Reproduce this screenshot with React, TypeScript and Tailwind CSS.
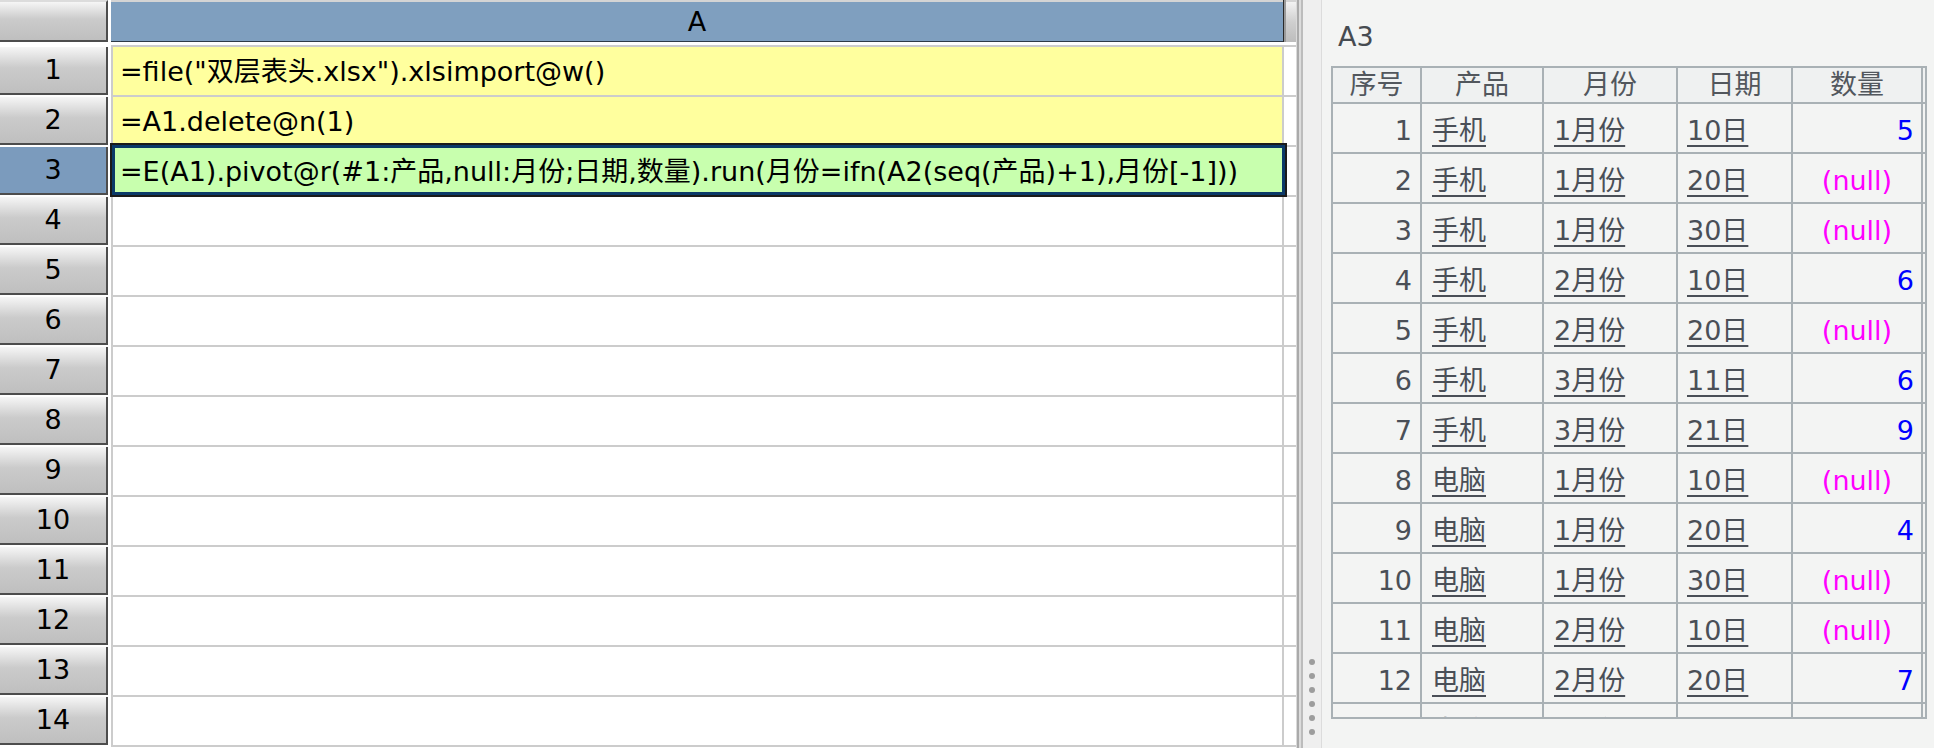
import React from "react";

const font = "font-['DejaVu_Sans','Noto_Sans_CJK_SC',sans-serif]";

type Cell = { text: string; kind: "yellow" | "green" | "white" };

const sheetRows: Cell[] = [
  { text: '=file("双层表头.xlsx").xlsimport@w()', kind: "yellow" },
  { text: "=A1.delete@n(1)", kind: "yellow" },
  {
    text: "=E(A1).pivot@r(#1:产品,null:月份;日期,数量).run(月份=ifn(A2(seq(产品)+1),月份[-1]))",
    kind: "green",
  },
  ...Array.from({ length: 11 }, () => ({ text: "", kind: "white" as const })),
];

type Rec = { no: number; p: string; m: string; d: string; q: number | null };

const data: Rec[] = [
  { no: 1, p: "手机", m: "1月份", d: "10日", q: 5 },
  { no: 2, p: "手机", m: "1月份", d: "20日", q: null },
  { no: 3, p: "手机", m: "1月份", d: "30日", q: null },
  { no: 4, p: "手机", m: "2月份", d: "10日", q: 6 },
  { no: 5, p: "手机", m: "2月份", d: "20日", q: null },
  { no: 6, p: "手机", m: "3月份", d: "11日", q: 6 },
  { no: 7, p: "手机", m: "3月份", d: "21日", q: 9 },
  { no: 8, p: "电脑", m: "1月份", d: "10日", q: null },
  { no: 9, p: "电脑", m: "1月份", d: "20日", q: 4 },
  { no: 10, p: "电脑", m: "1月份", d: "30日", q: null },
  { no: 11, p: "电脑", m: "2月份", d: "10日", q: null },
  { no: 12, p: "电脑", m: "2月份", d: "20日", q: 7 },
  { no: 13, p: "电脑", m: "2月份", d: "30日", q: null },
];

function RowHeader({ n, selected }: { n: number; selected: boolean }) {
  return (
    <div className="w-[108px] h-[50px] shrink-0 pb-[2px]">
      <div
        className={
          "h-[48px] flex items-center justify-center text-[27px] leading-[30px] text-black border-r-2 border-b-2 border-[#4d4d4d] " +
          (selected
            ? "bg-[#7b9bbd]"
            : "bg-linear-to-b from-[#f6f6f6] via-[#cbcbcb] via-45% to-[#bfbfbf]")
        }
      >
        {n}
      </div>
    </div>
  );
}

function SheetRow({ n, cell }: { n: number; cell: Cell }) {
  const bg =
    cell.kind === "yellow" ? "bg-[#ffff9e]" : cell.kind === "green" ? "bg-[#c8ffae]" : "bg-white";
  return (
    <div className="flex h-[50px] shrink-0">
      <RowHeader n={n} selected={cell.kind === "green"} />
      <div className="w-[3px] shrink-0" />
      <div className="relative flex flex-1 border-l-2 border-b-2 border-[#cccccc]">
        <div
          className={
            "w-[1171px] shrink-0 border-r-2 border-[#cccccc] flex items-center pl-[7px] pt-[2px] text-[27px] leading-[30px] text-black whitespace-nowrap " +
            bg
          }
        >
          {cell.text}
        </div>
        <div className="w-[10px] shrink-0 bg-white" />
        {cell.kind === "green" && (
          <div className="absolute left-[-3px] top-[-4px] w-[1177px] h-[54px] border-2 border-[#1b1b1b] shadow-[inset_0_0_0_3px_#0b3a68]" />
        )}
      </div>
    </div>
  );
}

const colW = ["w-[89px]", "w-[122px]", "w-[134px]", "w-[115px]", "w-[130px]"];

function TableRow({ r }: { r: Rec }) {
  const base = "h-full shrink-0 border-r-2 border-[#a9b1b5] flex items-center pt-[6px]";
  const link = "underline decoration-2 underline-offset-[5px]";
  return (
    <div className="flex h-[50px] shrink-0 border-b-2 border-[#a9b1b5] text-[27px] leading-[30px] text-[#4a4f57]">
      <div className={`${base} ${colW[0]} justify-end pr-[8px]`}>{r.no}</div>
      <div className={`${base} ${colW[1]} pl-[10px]`}>
        <span className={link}>{r.p}</span>
      </div>
      <div className={`${base} ${colW[2]} pl-[10px]`}>
        <span className={link}>{r.m}</span>
      </div>
      <div className={`${base} ${colW[3]} pl-[9px]`}>
        <span className={link}>{r.d}</span>
      </div>
      {r.q === null ? (
        <div className={`${base} ${colW[4]} justify-center text-[#ff00ff]`}>(null)</div>
      ) : (
        <div className={`${base} ${colW[4]} justify-end pr-[7px] text-[#0000ff]`}>{r.q}</div>
      )}
    </div>
  );
}

export default function App() {
  return (
    <div className={`flex w-[1934px] h-[748px] overflow-hidden bg-white ${font}`}>
      {/* Left: spreadsheet grid */}
      <div className="w-[1296px] shrink-0 flex flex-col bg-white">
        <div className="flex h-[42px] shrink-0">
          <div className="w-[108px] shrink-0 border-t-2 border-t-[#dcdcdc] border-r-2 border-b-2 border-r-[#4d4d4d] border-b-[#4d4d4d] bg-linear-to-b from-[#f6f6f6] via-[#cbcbcb] via-45% to-[#bfbfbf]" />
          <div className="w-[3px] shrink-0" />
          <div className="w-[1172px] shrink-0 border-t-2 border-t-[#d4d4d4] border-b border-b-[#2e3a47] bg-[#7f9fbf] flex items-center justify-center text-[27px] leading-[30px] text-black">
            A
          </div>
          <div className="w-[3px] shrink-0 border-l border-[#2a2a2a] bg-[#9a9a9a]" />
          <div className="w-[10px] shrink-0 border-t-2 border-t-[#d4d4d4] bg-linear-to-b from-[#f3f3f3] via-[#cfcfcf] to-[#bdbdbd]" />
        </div>
        <div className="flex h-[5px] shrink-0">
          <div className="w-[111px] shrink-0" />
          <div className="flex-1 border-b-2 border-[#cccccc]" />
        </div>
        {sheetRows.map((c, i) => (
          <SheetRow key={i} n={i + 1} cell={c} />
        ))}
      </div>

      {/* Splitter */}
      <div className="w-[7px] shrink-0 flex">
        <div className="w-[1px] bg-[#dadada]" />
        <div className="w-[2px] bg-[#aaaaaa]" />
        <div className="w-[2px] bg-[#dcdcdc]" />
        <div className="w-[2px] bg-[#bcbcbc]" />
      </div>
      <div className="w-[19px] shrink-0 bg-[#efefef] border-r border-[#dcdcdc] flex flex-col items-center pt-[659px] gap-[8px]">
        {Array.from({ length: 6 }).map((_, i) => (
          <div key={i} className="w-[6px] h-[6px] rounded-full bg-[#9d9d9d]" />
        ))}
      </div>

      {/* Right: result panel */}
      <div className="flex-1 bg-[#f3f4f3] pl-[9px] flex flex-col">
        <div className="pt-[22px] pl-[7px] text-[27px] leading-[30px] text-[#464b51]">A3</div>
        <div className="mt-[14px] w-[596px] h-[653px] border-2 border-[#a9b1b5] overflow-hidden">
          <div className="flex h-[36px] shrink-0 border-b-2 border-[#a9b1b5] bg-[#eff1f1] text-[27px] leading-[30px] text-[#52575d]">
            {["序号", "产品", "月份", "日期", "数量"].map((h, i) => (
              <div
                key={h}
                className={`${colW[i]} h-full shrink-0 border-r-2 border-[#a9b1b5] flex items-center justify-center`}
              >
                {h}
              </div>
            ))}
          </div>
          {data.map((r) => (
            <TableRow key={r.no} r={r} />
          ))}
        </div>
      </div>
    </div>
  );
}
